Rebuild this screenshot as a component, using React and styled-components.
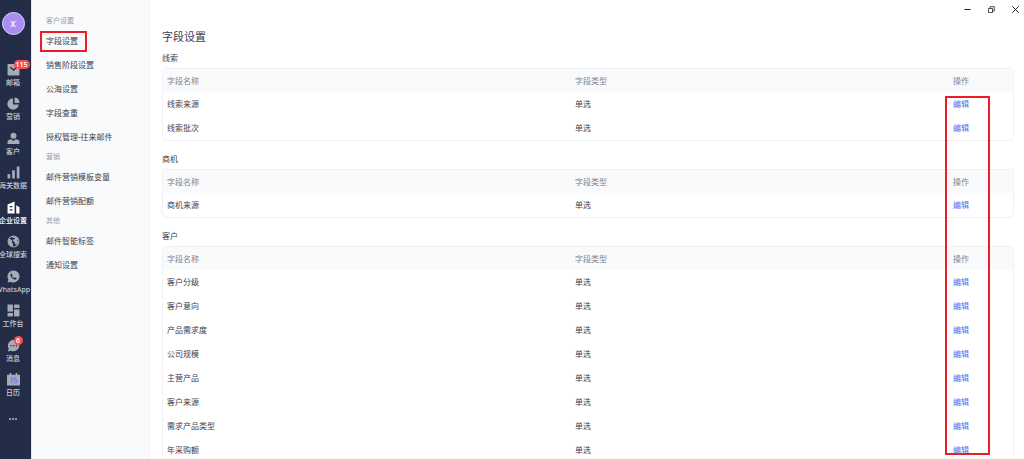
import styled, { createGlobalStyle } from "styled-components";

const GlobalStyle = createGlobalStyle`
  * {
    box-sizing: border-box;
  }

  body {
    margin: 0;
    background-color: #fff;
    color: #3d4250;
    font-family: "Noto Sans", "Noto Sans CJK SC", sans-serif;
    font-size: 8px;
    line-height: 12px;
  }

  button {
    padding: 0;
    border: 0;
    background: none;
    color: inherit;
    font: inherit;
  }

  a {
    color: inherit;
    text-decoration: none;
  }
`;

const Layout = styled.div`
  display: flex;
  height: 100vh;
  overflow: hidden;
`;

const Rail = styled.aside`
  display: flex;
  flex-direction: column;
  align-items: center;
  flex: none;
  width: 31px;
  padding: 12px 5px 0 0;
  background-color: #232d47;
`;

const Avatar = styled.button`
  width: 23px;
  height: 23px;
  flex: none;
  border: 1px solid #d9d3f5;
  border-radius: 50%;
  background-color: #a98df3;
  color: #fff;
  font-weight: 600;
`;

const RailNav = styled.nav`
  display: flex;
  flex-direction: column;
  justify-content: space-between;
  flex: 1;
  width: 100%;
  margin-top: 28px;
`;

const RailLink = styled.a`
  display: flex;
  flex-direction: column;
  align-items: center;
  gap: 2px;
  color: ${({ $active }) => ($active ? "#fff" : "#a7abb7")};
  font-size: 7px;
  line-height: 10px;
  white-space: nowrap;
`;

const RailLabel = styled.span`
  color: ${({ $active }) => ($active ? "#fff" : "#c8cbd3")};
  font-weight: 500;
`;

const RailIcon = styled.span`
  position: relative;
  height: 13px;

  & svg {
    display: block;
    width: 13px;
    height: 13px;
  }
`;

const Badge = styled.span`
  position: absolute;
  top: -3px;
  left: 7px;
  min-width: 9px;
  padding: 0 2px;
  border-radius: 5px;
  background-color: #f94c4c;
  color: #fff;
  font-size: 7px;
  font-weight: 600;
  line-height: 9px;
  text-align: center;
`;

const MoreBtn = styled.button`
  display: flex;
  gap: 1px;
  flex: none;
  margin: 20px 0 39px;

  & i {
    width: 2px;
    height: 2px;
    background-color: #8f96a6;
  }
`;

const Menu = styled.nav`
  flex: none;
  width: 119px;
  padding: 13px 0 0 14px;
  border-left: 1px solid #e4e7ef;
  border-right: 1px solid #eff1f4;
  background-color: #f9fafc;
`;

const MenuTitle = styled.h2`
  margin: 0;
  color: #9a9da6;
  font-size: 7px;
  font-weight: 400;
  line-height: 16px;
`;

const MenuList = styled.ul`
  margin: 0;
  padding: 0;
  list-style: none;
`;

const MenuLink = styled.a`
  display: inline-block;
  position: relative;
  line-height: 24px;
  vertical-align: top;
  white-space: nowrap;
`;

const MenuMark = styled.span`
  position: absolute;
  top: 2px;
  right: -9px;
  bottom: 1px;
  left: -6px;
  border: 2px solid #ee1c25;
`;

const Main = styled.main`
  position: relative;
  flex: 1;
  min-width: 0;
  padding: 0 10px 0 12px;
`;

const WindowBar = styled.div`
  display: flex;
  justify-content: flex-end;
  gap: 6px;
  height: 18px;
  margin-right: -10px;
`;

const WindowBtn = styled.button`
  display: flex;
  align-items: center;
  justify-content: center;
  width: 18px;
  color: #222;
`;

const PageTitle = styled.h1`
  margin: 11px 0 7px;
  font-size: 11px;
  font-weight: 400;
  line-height: 16px;
`;

const Section = styled.section`
  margin-bottom: 12px;
`;

const SectionTitle = styled.h2`
  margin: 0 0 4px;
  font-size: 8px;
  font-weight: 400;
  line-height: 12px;
`;

const TableFrame = styled.div`
  overflow: hidden;
  border: 1px solid #f0f1f4;
  border-radius: 4px;
`;

const Table = styled.table`
  width: 100%;
  border-collapse: collapse;
  table-layout: fixed;

  & th,
  & td {
    height: 24px;
    padding: 0 4px;
    font-weight: 400;
    text-align: left;
  }

  & th {
    height: 23px;
    background-color: #f9fafc;
    color: #81848d;
  }

  & th:first-child {
    width: 48%;
  }

  & th:last-child {
    width: 64px;
  }
`;

const EditLink = styled.a`
  color: #4c6fe8;
`;

const ActionMark = styled.div`
  position: absolute;
  top: 96px;
  right: 34px;
  bottom: 4px;
  width: 45px;
  border: 2px solid #ee1c25;
  pointer-events: none;
`;

const Icon = ({ children }) => (
  <svg viewBox="0 0 24 24" fill="currentColor" aria-hidden="true">
    {children}
  </svg>
);

const MailIcon = () => (
  <Icon>
    <rect x="1" y="2" width="22" height="21" rx="2" />
    <path d="M6 8l6 5 6-5" fill="none" stroke="#232d47" strokeWidth="2.4" />
  </Icon>
);

const PieIcon = () => (
  <Icon>
    <path d="M11 2.2A10.6 10.6 0 1 0 21.8 14H11z" />
    <path d="M14 1a10 10 0 0 1 9 10h-9z" />
  </Icon>
);

const PersonIcon = () => (
  <Icon>
    <circle cx="12" cy="7" r="5.5" />
    <path d="M1 22v-4c0-2.500 3-4.500 7.500-4.500L12 18l3.500-4.500C20 13.500 23 15.500 23 18v4z" />
    <path d="M12 14l1.500 5h-3z" />
  </Icon>
);

const BarsIcon = () => (
  <Icon>
    <rect x="1" y="15" width="5" height="8" />
    <rect x="9.500" y="8" width="5" height="15" />
    <rect x="18" y="1" width="5" height="22" />
  </Icon>
);

const BuildingIcon = () => (
  <Icon>
    <path
      fillRule="evenodd"
      d="M1 6.500L14 1v22H1zM5 9v2.500h5V9zM5 15v2.500h5V15z"
    />
    <path d="M17 8l6 3.500V23h-6z" />
  </Icon>
);

const GlobeIcon = () => (
  <Icon>
    <circle
      cx="12"
      cy="12"
      r="10"
      fill="none"
      stroke="currentColor"
      strokeWidth="2"
    />
    <path d="M3 7l4 1 3 3-1 3 2 2v5.500C6 20 3 17 2.500 12z" />
    <path d="M9 2l8 1 4 5-2 2 2 4-3 4-3-1-1-4-3-2 1-3 3-1-1-2-3 1z" />
  </Icon>
);

const WhatsAppIcon = () => (
  <Icon>
    <path d="M12 1a11 11 0 0 0-9.400 16.700L1 23l5.500-1.500A11 11 0 1 0 12 1z" />
    <path
      d="M8.400 6.400c-.5 0-2 .9-2 3 0 3.800 4.500 8.300 8.300 8.300 2 0 3-1.400 3-2.400 0-.5-2.900-2-3.400-1.900-.5.100-1 1.400-1.500 1.400-1 0-3.600-2.500-3.600-3.400 0-.5 1.100-1 1.100-1.500s-1-3.500-1.900-3.500z"
      fill="#232d47"
    />
  </Icon>
);

const BoardIcon = () => (
  <Icon>
    <rect x="1" y="1" width="10" height="13" />
    <rect x="1" y="16.500" width="10" height="6.500" />
    <rect x="13" y="1" width="10" height="6.500" />
    <rect x="13" y="10" width="10" height="13" />
  </Icon>
);

const ChatIcon = () => (
  <Icon>
    <path d="M12.500 1.500A10.500 10.500 0 1 1 8 21.600L1.500 23l1.800-5.500A10.500 10.500 0 0 1 12.500 1.500z" />
    <g fill="#232d47">
      <circle cx="7.500" cy="12.500" r="1.500" />
      <circle cx="12.500" cy="12.500" r="1.500" />
      <circle cx="17.500" cy="12.500" r="1.500" />
    </g>
  </Icon>
);

const CalendarIcon = () => (
  <Icon>
    <path d="M5 0h3v3h8V0h3v3h5v20H0V3h5z" />
    <g fill="none" stroke="#6388e6" strokeWidth="2.200">
      <path d="M6 10l2.500-1.500V19" />
      <path d="M18 9h-5v4h3a2.500 2.500 0 0 1 0 5h-4" />
    </g>
  </Icon>
);

const railItems = [
  { label: "邮箱", icon: MailIcon, badge: 115 },
  { label: "营销", icon: PieIcon },
  { label: "客户", icon: PersonIcon },
  { label: "海关数据", icon: BarsIcon },
  { label: "企业设置", icon: BuildingIcon, active: true },
  { label: "全球搜索", icon: GlobeIcon },
  { label: "WhatsApp", icon: WhatsAppIcon },
  { label: "工作台", icon: BoardIcon },
  { label: "消息", icon: ChatIcon, badge: 6 },
  { label: "日历", icon: CalendarIcon },
];

const menuGroups = [
  {
    title: "客户设置",
    items: [
      "字段设置",
      "销售阶段设置",
      "公海设置",
      "字段查重",
      "授权管理-往来邮件",
    ],
  },
  { title: "营销", items: ["邮件营销模板变量", "邮件营销配额"] },
  { title: "其他", items: ["邮件智能标签", "通知设置"] },
];

const sections = [
  { title: "线索", fields: ["线索来源", "线索批次"] },
  { title: "商机", fields: ["商机来源"] },
  {
    title: "客户",
    fields: [
      "客户分级",
      "客户意向",
      "产品需求度",
      "公司规模",
      "主营产品",
      "客户来源",
      "需求产品类型",
      "年采购额",
    ],
  },
];

const SideRail = () => (
  <Rail>
    <Avatar>X</Avatar>
    <RailNav>
      {railItems.map(({ label, icon: ItemIcon, badge, active }) => (
        <RailLink key={label} href="#" $active={active}>
          <RailIcon>
            <ItemIcon />
            {badge && <Badge>{badge}</Badge>}
          </RailIcon>
          <RailLabel $active={active}>{label}</RailLabel>
        </RailLink>
      ))}
    </RailNav>
    <MoreBtn aria-label="更多">
      <i />
      <i />
      <i />
    </MoreBtn>
  </Rail>
);

const SettingsMenu = () => (
  <Menu>
    {menuGroups.map(({ title, items }) => (
      <div key={title}>
        <MenuTitle>{title}</MenuTitle>
        <MenuList>
          {items.map((item) => (
            <li key={item}>
              <MenuLink href="#">
                {item}
                {item === "字段设置" && <MenuMark />}
              </MenuLink>
            </li>
          ))}
        </MenuList>
      </div>
    ))}
  </Menu>
);

const WindowControls = () => (
  <WindowBar>
    <WindowBtn aria-label="最小化">
      <svg width="7" height="7" viewBox="0 0 7 7" stroke="currentColor">
        <path d="M0.500 3.500h6" />
      </svg>
    </WindowBtn>
    <WindowBtn aria-label="还原">
      <svg
        width="7"
        height="7"
        viewBox="0 0 7 7"
        fill="none"
        stroke="currentColor"
        strokeWidth="0.800"
      >
        <path d="M0.500 2.500h4v4h-4zM2 2.500V0.700h4.300V5H4.500" />
      </svg>
    </WindowBtn>
    <WindowBtn aria-label="关闭">
      <svg width="7" height="7" viewBox="0 0 7 7" stroke="currentColor">
        <path d="M0.300 0.300l6.400 6.400M6.700 0.300L0.300 6.700" />
      </svg>
    </WindowBtn>
  </WindowBar>
);

const FieldSection = ({ title, fields }) => (
  <Section>
    <SectionTitle>{title}</SectionTitle>
    <TableFrame>
      <Table>
        <thead>
          <tr>
            <th>字段名称</th>
            <th>字段类型</th>
            <th>操作</th>
          </tr>
        </thead>
        <tbody>
          {fields.map((field) => (
            <tr key={field}>
              <td>{field}</td>
              <td>单选</td>
              <td>
                <EditLink href="#">编辑</EditLink>
              </td>
            </tr>
          ))}
        </tbody>
      </Table>
    </TableFrame>
  </Section>
);

export default function App() {
  return (
    <Layout>
      <GlobalStyle />
      <SideRail />
      <SettingsMenu />
      <Main>
        <WindowControls />
        <PageTitle>字段设置</PageTitle>
        {sections.map((section) => (
          <FieldSection key={section.title} {...section} />
        ))}
        <ActionMark />
      </Main>
    </Layout>
  );
}
